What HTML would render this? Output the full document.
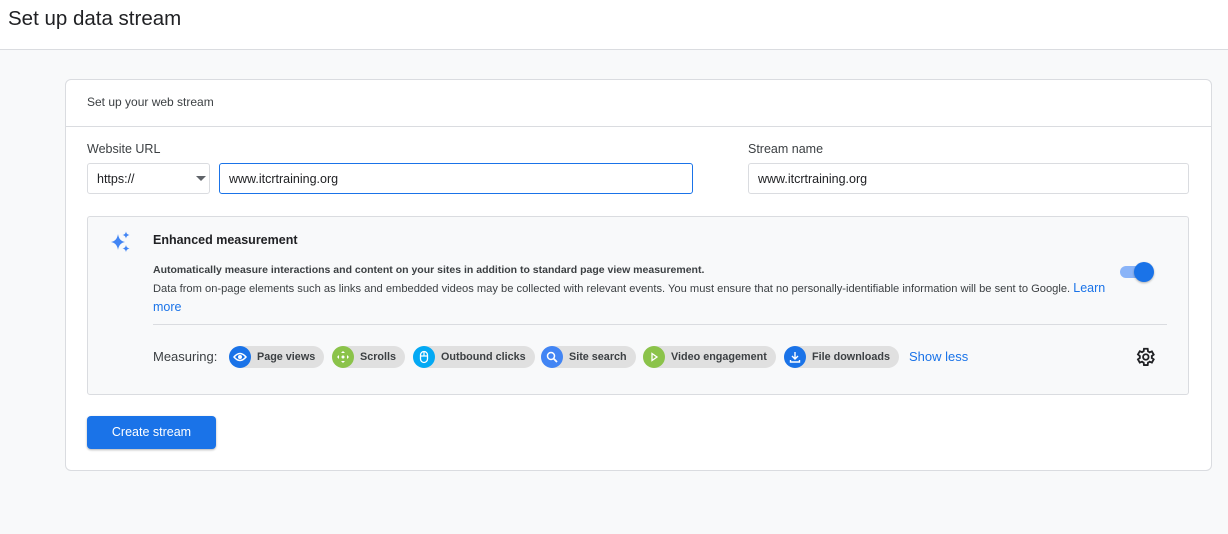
<!DOCTYPE html><html><head><style>
*{box-sizing:border-box;margin:0;padding:0}
body{width:1228px;height:534px;background:#f8f9fa;font-family:"Liberation Sans",Arial,sans-serif;color:#202124;position:relative;overflow:hidden}
.a{position:absolute}
.top{left:0;top:0;width:1228px;height:50px;background:#fff;border-bottom:1px solid #dadce0}
.chip{position:absolute;top:346px;height:22px;border-radius:11px;background:#e0e0e0;font-size:10.8px;font-weight:bold;color:#3c4043;line-height:22px;padding-left:28px;padding-right:9px;white-space:nowrap}
.ci{position:absolute;left:0;top:0;width:22px;height:22px;border-radius:11px}
.ci svg{position:absolute;left:4px;top:4px}
</style></head><body>
<div class="a top"><div class="a" style="left:8px;top:7px;font-size:20.5px;color:#202124">Set up data stream</div></div>
<div class="a" style="left:65px;top:79px;width:1147px;height:392px;background:#fff;border:1px solid #dadce0;border-radius:6px"></div>
<div class="a" style="left:87px;top:95px;font-size:12px;color:#3c4043">Set up your web stream</div>
<div class="a" style="left:66px;top:126px;width:1145px;height:1px;background:#dadce0"></div>
<div class="a" style="left:87px;top:142px;font-size:12.5px;color:#3c4043">Website URL</div>
<div class="a" style="left:748px;top:142px;font-size:12.5px;color:#3c4043">Stream name</div>
<div class="a" style="left:87px;top:163px;width:123px;height:31px;border:1px solid #dadce0;border-radius:3px;font-size:12.5px;padding:8px 9px">https://</div>
<div class="a" style="left:196px;top:176px;border-left:5px solid transparent;border-right:5px solid transparent;border-top:5px solid #5f6368"></div>
<div class="a" style="left:219px;top:163px;width:474px;height:31px;border:1px solid #1a73e8;border-radius:3px;font-size:12.5px;padding:8px 9px">www.itcrtraining.org</div>
<div class="a" style="left:748px;top:163px;width:441px;height:31px;border:1px solid #dadce0;border-radius:3px;font-size:12.5px;padding:8px 9px">www.itcrtraining.org</div>
<div class="a" style="left:87px;top:216px;width:1102px;height:179px;background:#f8f9fa;border:1px solid #dadce0;border-radius:3px"></div>
<svg class="a" style="left:110px;top:231px" width="22" height="22" viewBox="0 0 22 22"><path d="M8 3 Q9 10 15 11 Q9 12 8 19 Q7 12 1 11 Q7 10 8 3Z" fill="#4285f4"/><path d="M16 0.5 Q16.5 3.5 19.5 4 Q16.5 4.5 16 7.5 Q15.5 4.5 12.5 4 Q15.5 3.5 16 0.5Z" fill="#4285f4"/><path d="M16 14 Q16.5 17 19.5 17.5 Q16.5 18 16 21 Q15.5 18 12.5 17.5 Q15.5 17 16 14Z" fill="#4285f4"/></svg>
<div class="a" style="left:153px;top:233px;font-size:12.5px;font-weight:bold;color:#202124">Enhanced measurement</div>
<div class="a" style="left:153px;top:264px;font-size:10.5px;font-weight:bold;color:#3c4043">Automatically measure interactions and content on your sites in addition to standard page view measurement.</div>
<div class="a" style="left:153px;top:279px;width:1000px;font-size:11.15px;line-height:18px;color:#3c4043;white-space:nowrap">Data from on-page elements such as links and embedded videos may be collected with relevant events. You must ensure that no personally-identifiable information will be sent to Google. <span style="color:#1a73e8;font-size:12.5px">Learn</span><br><span style="color:#1a73e8;font-size:12.5px">more</span></div>
<div class="a" style="left:1120px;top:266px;width:32px;height:12px;border-radius:6px;background:#8ab4f8"></div>
<div class="a" style="left:1134px;top:262px;width:20px;height:20px;border-radius:10px;background:#1a73e8;box-shadow:0 1px 2px rgba(0,0,0,.3)"></div>
<div class="a" style="left:153px;top:324px;width:1014px;height:1px;background:#dadce0"></div>
<div class="a" style="left:153px;top:349px;font-size:13px;color:#3c4043">Measuring:</div>
<div class="chip" style="left:229px"><div class="ci" style="background:#1a73e8"><svg width="14" height="14" viewBox="0 0 14 14"><path d="M1 7Q7 0 13 7Q7 14 1 7Z" fill="none" stroke="#fff" stroke-width="1.5"/><circle cx="7" cy="7" r="2" fill="#fff"/></svg></div>Page views</div>
<div class="chip" style="left:332px"><div class="ci" style="background:#8bc34a"><svg width="14" height="14" viewBox="0 0 14 14"><path d="M7 1L9 3H5ZM7 13L5 11H9ZM1 7L3 5V9ZM13 7L11 9V5Z" fill="#fff"/><circle cx="7" cy="7" r="1.5" fill="#fff"/></svg></div>Scrolls</div>
<div class="chip" style="left:413px"><div class="ci" style="background:#03a9f4"><svg width="14" height="14" viewBox="0 0 14 14"><rect x="3.5" y="1.5" width="7" height="11" rx="3.5" fill="none" stroke="#fff" stroke-width="1.3"/><path d="M7 2V6M3.5 6H10.5" stroke="#fff" stroke-width="1.2"/></svg></div>Outbound clicks</div>
<div class="chip" style="left:541px"><div class="ci" style="background:#4285f4"><svg width="14" height="14" viewBox="0 0 14 14"><circle cx="6" cy="6" r="3.5" fill="none" stroke="#fff" stroke-width="1.5"/><path d="M8.5 8.5L12 12" stroke="#fff" stroke-width="1.8"/></svg></div>Site search</div>
<div class="chip" style="left:643px"><div class="ci" style="background:#8bc34a"><svg width="14" height="14" viewBox="0 0 14 14"><path d="M5 3.5L10 7L5 10.5Z" fill="none" stroke="#fff" stroke-width="1.3"/></svg></div>Video engagement</div>
<div class="chip" style="left:784px"><div class="ci" style="background:#1a73e8"><svg width="14" height="14" viewBox="0 0 14 14"><path d="M7 2V9M4 6L7 9L10 6M2.5 10V12H11.5V10" fill="none" stroke="#fff" stroke-width="1.4"/></svg></div>File downloads</div>
<div class="a" style="left:909px;top:349px;font-size:13px;color:#1a73e8">Show less</div>
<svg class="a" style="left:1134px;top:346px" width="22" height="22" viewBox="0 0 24 24"><path d="M19.4 13a7.5 7.5 0 000-2l2.1-1.6-2-3.5-2.5 1a7 7 0 00-1.7-1L14.9 3h-4l-.4 2.7a7 7 0 00-1.7 1l-2.5-1-2 3.5L6.4 11a7.5 7.5 0 000 2l-2.1 1.6 2 3.5 2.5-1a7 7 0 001.7 1l.4 2.7h4l.4-2.7a7 7 0 001.7-1l2.5 1 2-3.5z" fill="none" stroke="#202124" stroke-width="2"/><circle cx="12.9" cy="12" r="3" fill="none" stroke="#202124" stroke-width="2"/></svg>
<div class="a" style="left:87px;top:416px;width:129px;height:33px;background:#1a73e8;border-radius:4px;color:#fff;font-size:12.5px;text-align:center;line-height:33px;box-shadow:0 1px 2px rgba(0,0,0,.3)">Create stream</div>
</body></html>
